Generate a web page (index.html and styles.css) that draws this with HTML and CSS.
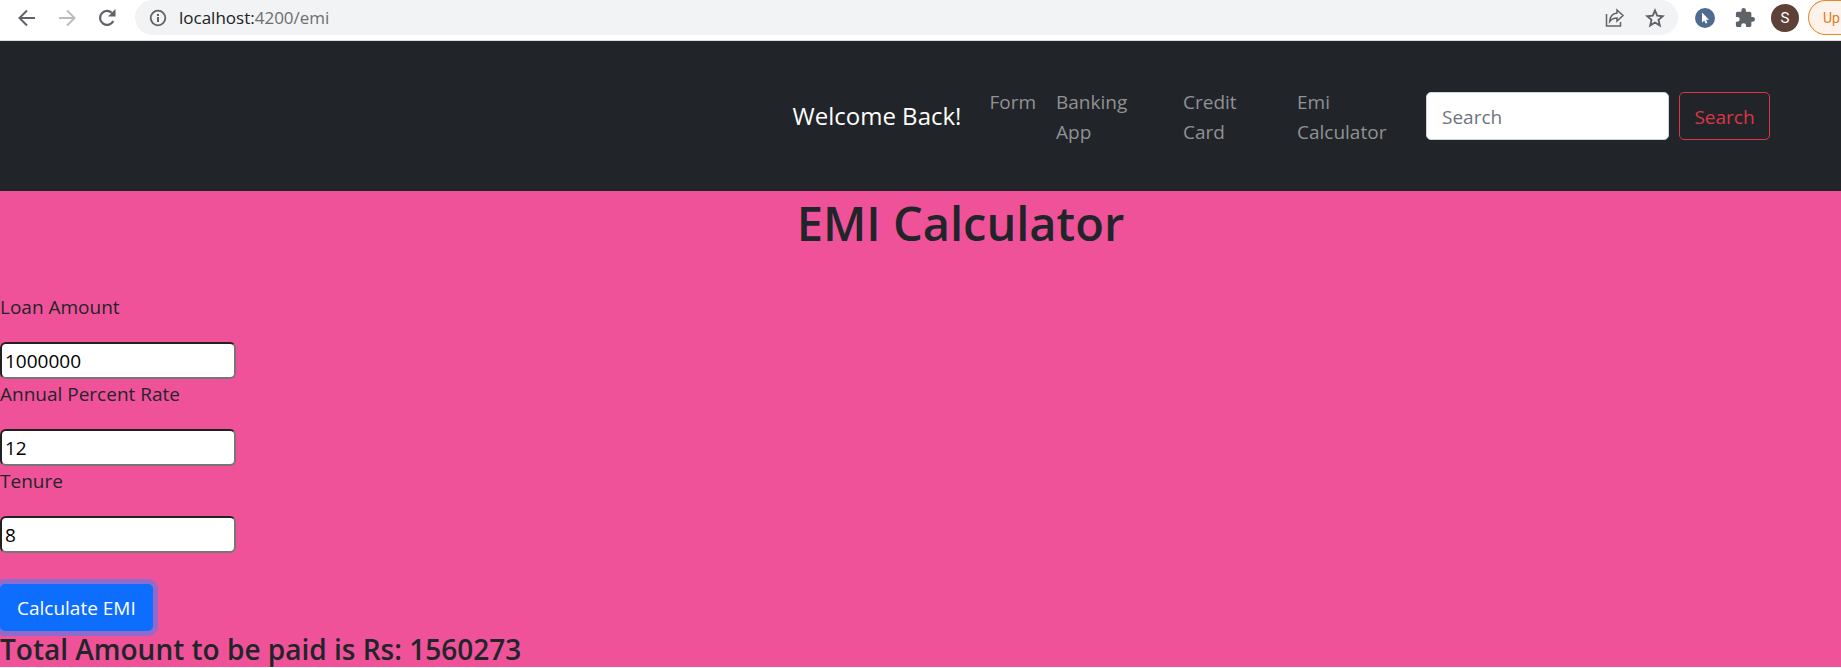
FILE: index.html
```html
<!DOCTYPE html>
<html lang="en">
<head>
<meta charset="utf-8">
<title>EMI Calculator</title>
<link rel="stylesheet" href="styles.css">
</head>
<body>
<div class="toolbar">
  <button class="tool" aria-label="Back"><svg width="20" height="20" viewBox="0 0 20 20" fill="none" stroke="#5f6368" stroke-width="2"><path d="M18 10H3M10 2.500L2.500 10l7.500 7.500"/></svg></button>
  <button class="tool" aria-label="Forward"><svg width="20" height="20" viewBox="0 0 20 20" fill="none" stroke="#babcbe" stroke-width="2"><path d="M2 10h15M10 2.500l7.500 7.500-7.500 7.500"/></svg></button>
  <button class="tool" aria-label="Reload"><svg width="20" height="20" viewBox="0 0 20 20"><path d="M16.300 13a7 7 0 1 1-1.500-8.300" fill="none" stroke="#5f6368" stroke-width="2.200"/><path d="M18.500 1v7.500H11z" fill="#5f6368"/></svg></button>
  <div class="address">
    <svg width="18" height="18" viewBox="0 0 18 18"><circle cx="9" cy="9" r="7.300" fill="none" stroke="#5f6368" stroke-width="1.800"/><path d="M8 8h2v5H8zM8 5h2v2H8z" fill="#5f6368"/></svg>
    <span class="url">localhost:<span class="path">4200/emi</span></span>
    <button class="tool share" aria-label="Share"><svg width="20" height="20" viewBox="0 0 20 20" fill="none" stroke="#5f6368" stroke-width="1.500"><path d="M1.500 6v12h14v-4M12 2l6 5.500-6 5.500v-3c-3.500 0-5.500 1-7.300 3.500C5 8.500 7.500 5.500 12 5z"/></svg></button>
    <button class="tool" aria-label="Bookmark"><svg width="20" height="20" viewBox="0 0 20 20" fill="none" stroke="#5f6368" stroke-width="1.900"><path d="M10 2.500l2.200 5.200 5.600.5-4.300 3.700 1.300 5.500-4.800-2.900-4.800 2.900 1.300-5.500-4.300-3.700 5.600-.5z"/></svg></button>
  </div>
  <button class="tool" aria-label="Cursor extension"><svg width="20" height="20" viewBox="0 0 20 20"><circle cx="10" cy="10" r="10" fill="#4f6b8f"/><path d="M7 4.500v10l2.300-2 1.400 3 1.700-.8-1.400-3h3z" fill="#fff"/></svg></button>
  <button class="tool" aria-label="Extensions"><svg width="20" height="20" viewBox="1 1 22 22" fill="#5f6368"><path d="M20.500 11H19V7c0-1.100-.9-2-2-2h-4V3.500a2.500 2.500 0 0 0-5 0V5H4c-1.100 0-2 .9-2 2v3.800h1.500a2.700 2.700 0 0 1 0 5.400H2V20c0 1.100.9 2 2 2h3.800v-1.500a2.700 2.700 0 0 1 5.400 0V22H17c1.100 0 2-.9 2-2v-4h1.500a2.500 2.500 0 0 0 0-5z"/></svg></button>
  <button class="avatar" aria-label="Profile">S</button>
  <button class="update">Up</button>
</div>
<nav class="navbar">
  <a class="brand" href="#">Welcome Back!</a>
  <ul class="links">
    <li><a href="#">Form</a></li>
    <li class="wide"><a href="#">Banking<br>App</a></li>
    <li class="medium"><a href="#">Credit<br>Card</a></li>
    <li class="wide"><a href="#">Emi<br>Calculator</a></li>
  </ul>
  <form class="search">
    <input type="search" placeholder="Search" aria-label="Search">
    <button type="button">Search</button>
  </form>
</nav>
<main>
  <h1>EMI Calculator</h1>
  <form class="emi">
    <label for="loan">Loan Amount</label>
    <input id="loan" type="text" value="1000000">
    <label for="rate">Annual Percent Rate</label>
    <input id="rate" type="text" value="12">
    <label for="tenure">Tenure</label>
    <input id="tenure" type="text" value="8">
    <button type="button" class="calculate">Calculate EMI</button>
  </form>
  <h3>Total Amount to be paid is Rs: 1560273</h3>
</main>
</body>
</html>
```
FILE: styles.css
```css
* { box-sizing: border-box; }
body {
  margin: 0;
  background: #fff;
  color: #212529;
  font: 19px/30px "Open Sans", "Noto Sans", sans-serif;
}
button, input { font: inherit; margin: 0; }
a { text-decoration: none; }

.toolbar {
  display: flex;
  align-items: center;
  gap: 20px;
  height: 41px;
  padding: 0 0 5px 17px;
  background: #fff;
  border-bottom: 1px solid #dadce0;
}
.tool {
  display: flex;
  flex: none;
  padding: 0;
  border: 0;
  background: none;
}
.address {
  display: flex;
  flex: 1;
  align-items: center;
  gap: 12px;
  height: 35px;
  margin: 0 -3px 0 -2px;
  padding: 0 13px 0 14px;
  border-radius: 18px;
  background: #f1f3f4;
}
.url { flex: 1; font-size: 17px; color: #202124; }
.path { color: #6b6f73; }
.share { margin-right: 8px; }
.avatar {
  flex: none;
  width: 28px;
  height: 28px;
  margin-left: -4px;
  padding: 0;
  border: 0;
  border-radius: 50%;
  background: #5d4037;
  color: #fff;
  font: 15px/28px Roboto, sans-serif;
}
.update {
  flex: none;
  width: 33px;
  height: 35px;
  margin-left: -11px;
  padding: 0 0 0 14px;
  border: 1px solid #e8862e;
  border-right: 0;
  border-radius: 18px 0 0 18px;
  background: #fdf3ea;
  color: #e37b1b;
  font: 14px/32px Roboto, sans-serif;
  text-align: left;
}

.navbar {
  display: flex;
  align-items: center;
  justify-content: flex-end;
  height: 150px;
  padding-right: 71px;
  background: #212529;
}
.brand { margin-right: 18px; color: #fff; font-size: 24px; }
.links {
  display: flex;
  margin: 0;
  padding: 2px 0 0;
  list-style: none;
}
.links li { padding: 0 10px; }
.links .wide { width: 127px; }
.links .medium { width: 114px; }
.links a { color: #909294; }
.search { display: flex; gap: 10px; margin-left: 12px; }
.search input {
  width: 243px;
  height: 48px;
  padding: 1px 15px 0;
  border: 1px solid #ced4da;
  border-radius: 5px;
  background: #fff;
}
.search input::placeholder { color: #6c757d; opacity: 1; }
.search button {
  width: 91px;
  height: 48px;
  padding: 1px 0 0;
  border: 1px solid #dc3545;
  border-radius: 5px;
  background: none;
  color: #dc3545;
}

main { background: #f0529a; display: flow-root; }
h1 {
  margin: 0 0 37px;
  padding-left: 80px;
  font-size: 47px;
  line-height: 64px;
  font-weight: 600;
  text-align: center;
}
.emi { display: flex; flex-direction: column; align-items: flex-start; }
.emi label { margin-bottom: 20px; }
.emi input {
  width: 236px;
  height: 37px;
  padding: 0 3px;
  border: 2px inset #767676;
  border-radius: 6px;
  background: #fff;
  color: #000;
}
.calculate {
  height: 47px;
  margin-top: 31px;
  padding: 0 17px;
  border: 0;
  border-radius: 5px;
  background: #0d6efd;
  color: #fff;
  box-shadow: 0 0 0 5px rgba(49, 132, 253, .5);
}
h3 {
  margin: 0;
  font-size: 28px;
  line-height: 36px;
  font-weight: 600;
}
```
